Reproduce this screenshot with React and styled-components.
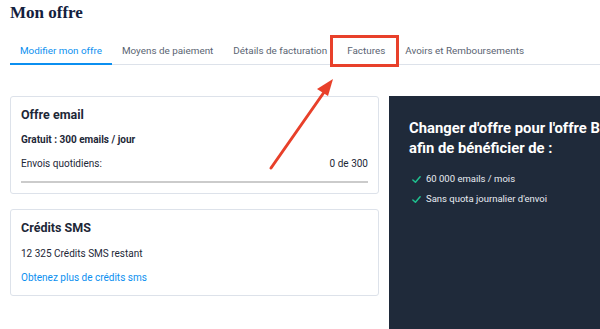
import styled, { createGlobalStyle } from 'styled-components'

const GlobalStyle = createGlobalStyle`
body {
  margin: 0;
  background: #ffffff;
  font-family: Roboto, "Liberation Sans", Arial, sans-serif;
  overflow: hidden;
}
`

const Page = styled.div`
position: relative;
width: 600px;
height: 329px;
overflow: hidden;
padding-left: 10px;
box-sizing: border-box;
`

const Title = styled.h1`
margin: 0;
padding-top: 2px;
font-family: "Liberation Serif", "DejaVu Serif", serif;
font-weight: 700;
font-size: 17px;
line-height: 22px;
color: #13203d;
`

const TabBar = styled.div`
display: flex;
margin-top: 16px;
border-bottom: 1px solid #dde2ea;
`

const Tab = styled.div`
padding: 0 10px;
height: 23px;
line-height: 22px;
font-size: 9.9px;
color: ${p => (p.$active ? '#0b8ff0' : '#5a6472')};
border-bottom: 2px solid ${p => (p.$active ? '#0b8ff0' : 'transparent')};
margin-bottom: -1px;
white-space: nowrap;
`

const Content = styled.div`
display: grid;
grid-template-columns: 369px 1fr;
gap: 10px;
margin-top: 31px;
align-items: start;
`

const Column = styled.div`
display: flex;
flex-direction: column;
gap: 15px;
`

const Card = styled.div`
border: 1px solid #dde2ea;
border-radius: 3px;
padding: 9px 10px ${p => p.$bottom || 11}px;
display: flex;
flex-direction: column;
`

const CardTitle = styled.div`
font-size: 12.5px;
font-weight: 700;
color: #1d2737;
line-height: 17px;
`

const Line = styled.div`
font-size: 10px;
font-weight: ${p => (p.$bold ? 700 : 400)};
color: ${p => (p.$link ? '#0b8ff0' : '#1d2737')};
line-height: 14px;
margin-top: ${p => p.$gap || 10}px;
display: flex;
justify-content: space-between;
`

const Progress = styled.div`
height: 2px;
background: #cbcbcb;
margin-top: 10px;
`

const Promo = styled.div`
background: #1f2a3a;
height: 240px;
padding: 22px 0 0 20px;
overflow: hidden;
`

const PromoTitle = styled.div`
color: #ffffff;
font-size: 14.8px;
font-weight: 700;
line-height: 20px;
white-space: nowrap;
`

const List = styled.ul`
list-style: none;
margin: 14px 0 0;
padding: 0 0 0 3px;
display: flex;
flex-direction: column;
gap: 6px;
`

const Item = styled.li`
display: flex;
align-items: center;
gap: 5px;
color: #e8ecf2;
font-size: 9.5px;
line-height: 14px;
`

const Highlight = styled.div`
position: absolute;
left: 330px;
top: 35px;
width: 69px;
height: 32px;
box-sizing: border-box;
border: 3px solid #e8402a;
`

const Arrow = styled.svg`
position: absolute;
left: 0;
top: 0;
pointer-events: none;
`

const Check = () => (
  <svg width="9" height="9" viewBox="0 0 10 10">
    <polyline points="1,5.5 3.8,8 9,2" fill="none" stroke="#1fbf8f" strokeWidth="1.7" strokeLinecap="round" strokeLinejoin="round" />
  </svg>
)

const tabs = ['Modifier mon offre', 'Moyens de paiement', 'Détails de facturation', 'Factures', 'Avoirs et Remboursements']

export default function App() {
  return (
    <Page>
      <GlobalStyle />
      <Title>Mon offre</Title>
      <TabBar>
        {tabs.map((t, i) => (
          <Tab key={t} $active={i === 0}>{t}</Tab>
        ))}
      </TabBar>
      <Content>
        <Column>
          <Card $bottom={10}>
            <CardTitle>Offre email</CardTitle>
            <Line $bold $gap={10}>Gratuit : 300 emails / jour</Line>
            <Line><span>Envois quotidiens:</span><span>0 de 300</span></Line>
            <Progress />
          </Card>
          <Card $bottom={10}>
            <CardTitle>Crédits SMS</CardTitle>
            <Line $gap={11}>12 325 Crédits SMS restant</Line>
            <Line $link>Obtenez plus de crédits sms</Line>
          </Card>
        </Column>
        <Promo>
          <PromoTitle>Changer d'offre pour l'offre Business<br />afin de bénéficier de :</PromoTitle>
          <List>
            <Item><Check />60 000 emails / mois</Item>
            <Item><Check />Sans quota journalier d'envoi</Item>
          </List>
        </Promo>
      </Content>
      <Highlight />
      <Arrow width="600" height="329">
        <line x1="271" y1="168" x2="327" y2="88" stroke="#e8402a" strokeWidth="3" strokeLinecap="round" />
        <polygon points="333,79 317,89 328,96" fill="#e8402a" />
      </Arrow>
    </Page>
  )
}
